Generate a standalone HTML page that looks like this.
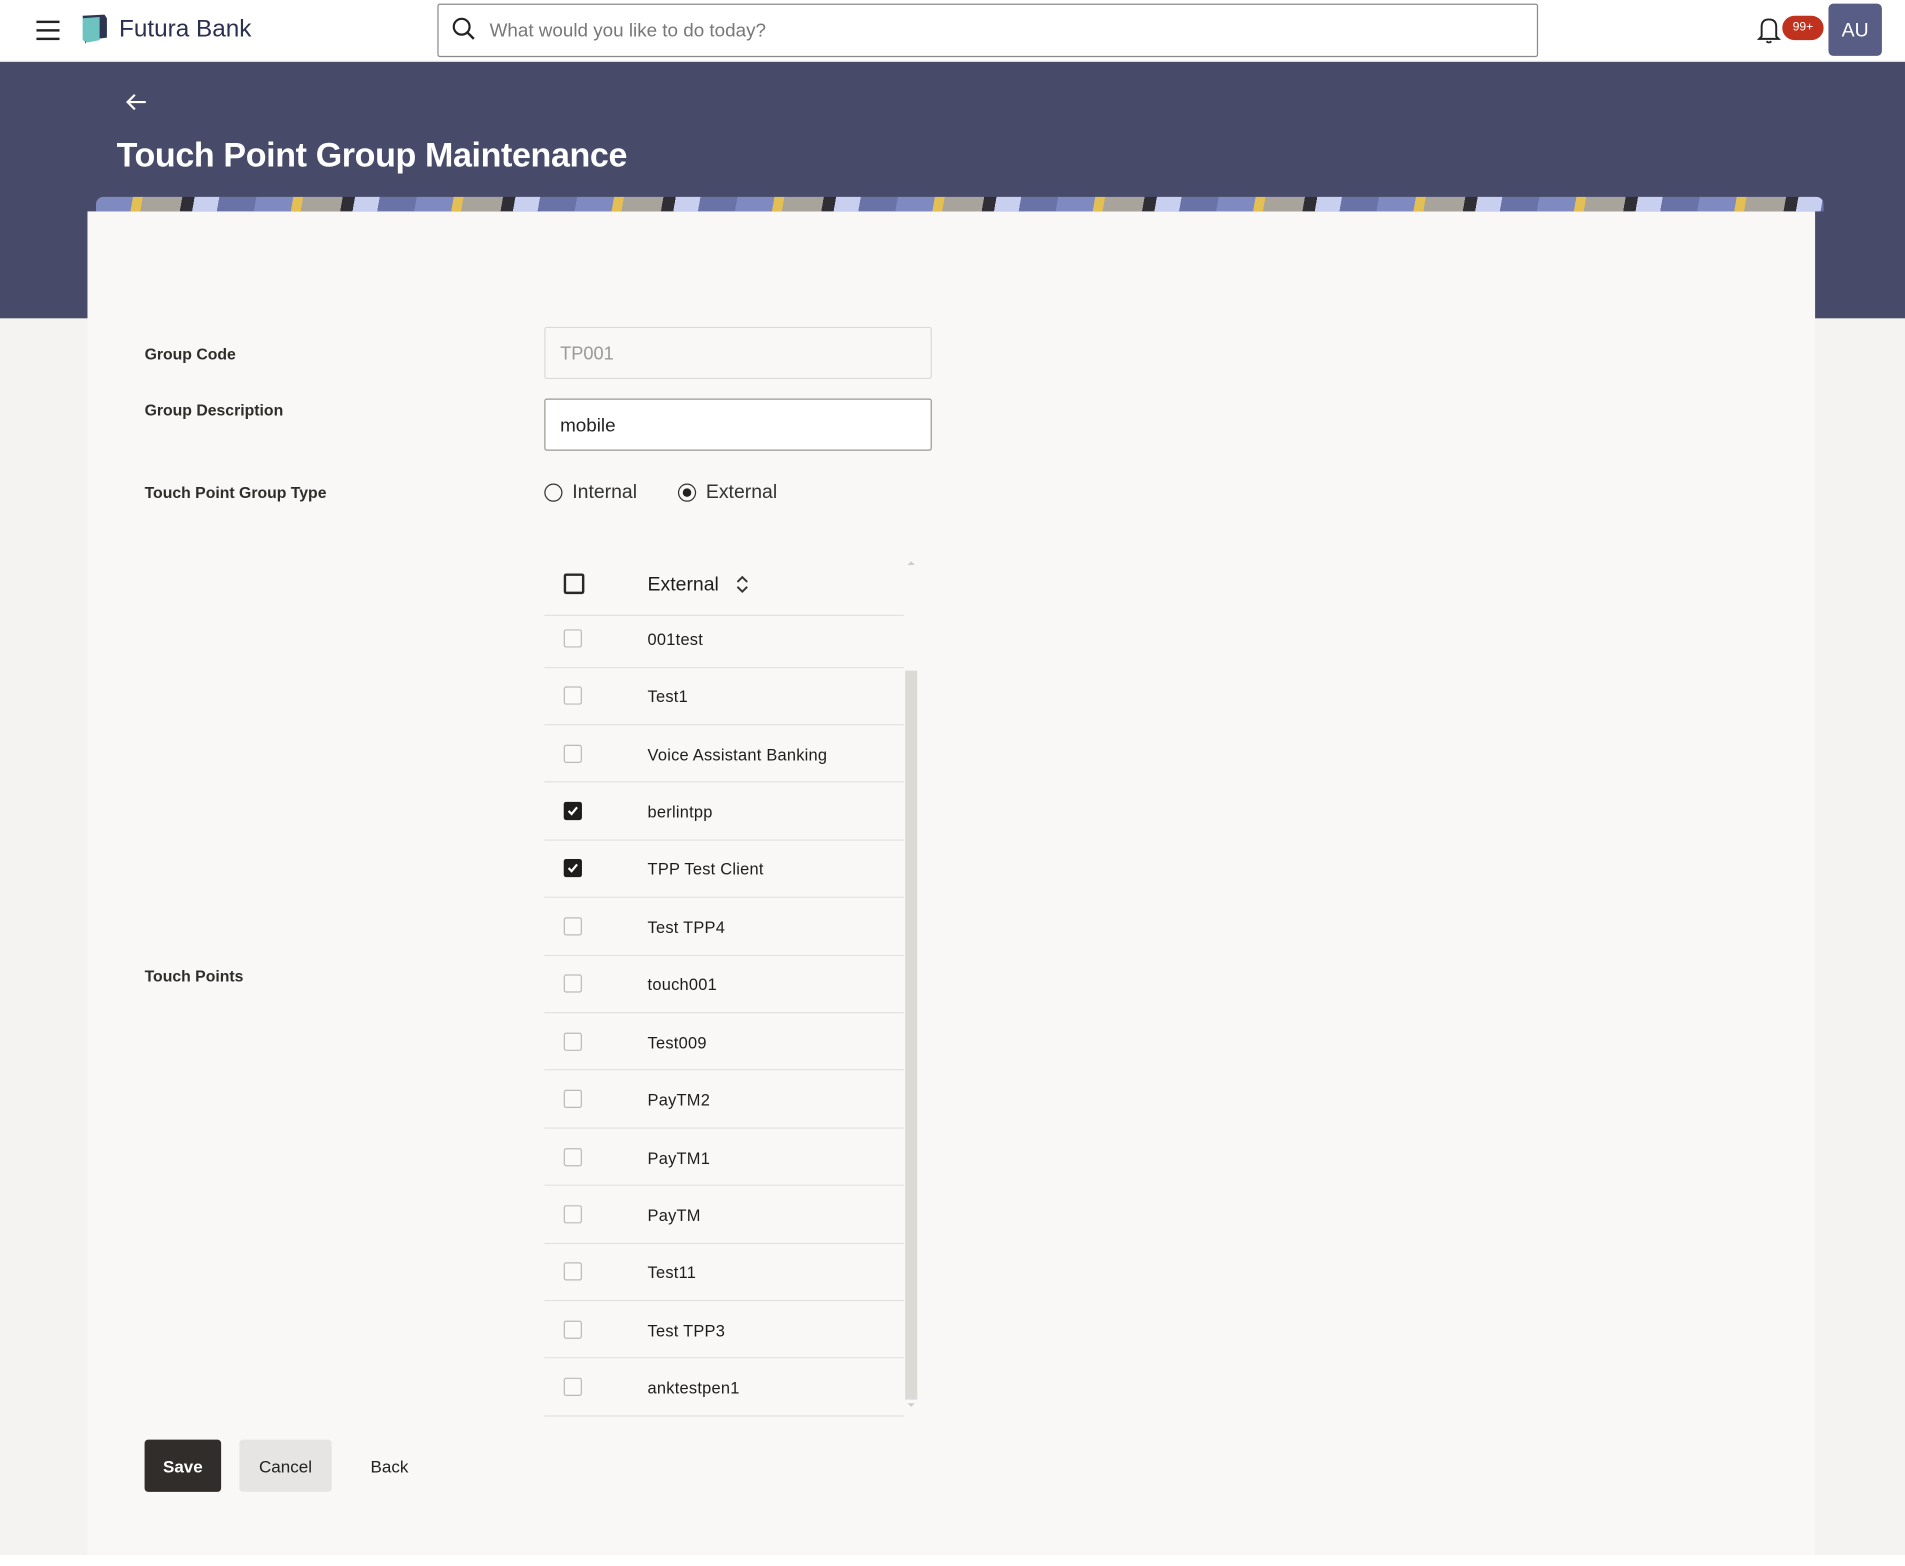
<!DOCTYPE html>
<html><head><meta charset="utf-8"><style>
html,body{margin:0;padding:0;width:1905px;height:1566px;overflow:hidden;background:#fff;}
#w{position:absolute;left:0;top:0;width:1568px;height:1289px;transform:scale(1.21492);transform-origin:0 0;font-family:"Liberation Sans",sans-serif;color:#1f1d1b;background:#f4f3f1;}
.a{position:absolute;}
.lbl{position:absolute;left:119px;font-size:13px;font-weight:bold;color:#2f2d2a;}
.cb{position:absolute;left:464px;width:13px;height:13px;border:1.5px solid #bdbab6;border-radius:2px;background:#fbfaf8;}
.cb.on{background:#1f1d1b;border-color:#1f1d1b;}
.row{position:absolute;left:533px;font-size:13.5px;color:#1f1d1b;letter-spacing:.2px;}
.sep{position:absolute;left:448px;width:296px;height:1px;background:#e4e2de;}
</style></head><body><div id="w">
<div class="a" style="left:0;top:0;width:1568px;height:50px;background:#fff;border-bottom:1px solid #e0e0e0"></div>
<div class="a" style="left:30px;top:17px;width:19px;height:2px;background:#222;box-shadow:0 7px 0 #222,0 14px 0 #222"></div>
<svg class="a" style="left:66px;top:11px" width="24" height="26" viewBox="0 0 24 26"><path d="M2 2 L20 1 L22 4 L22 20 L6 22 L4 25 Z" fill="#2e3553"/><path d="M2 4 L16 3 L16 22 L6 24 L2 22 Z" fill="#6cc3c0"/></svg>
<div class="a" style="left:98px;top:13px;font-size:20px;color:#2b3050">Futura Bank</div>
<div class="a" style="left:360px;top:3px;width:904px;height:42px;border:1px solid #8a8a8a;border-radius:2px;background:#fff"></div>
<svg class="a" style="left:372px;top:14px" width="20" height="20" viewBox="0 0 20 20"><circle cx="8" cy="8" r="6.5" fill="none" stroke="#222" stroke-width="1.8"/><path d="M13 13 L18 18" stroke="#222" stroke-width="2"/></svg>
<div class="a" style="left:403px;top:17px;font-size:15.5px;color:#777">What would you like to do today?</div>
<svg class="a" style="left:1446px;top:13px" width="20" height="24" viewBox="0 0 20 24"><path d="M4 17 L4 9 Q4 3 10 3 Q16 3 16 9 L16 17 L18 19 L2 19 Z" fill="none" stroke="#222" stroke-width="1.6"/><path d="M8 21 Q10 23 12 21" fill="none" stroke="#222" stroke-width="1.5"/></svg>
<div class="a" style="left:1467px;top:13px;width:34px;height:20px;border-radius:10px;background:#c0311e;color:#fff;font-size:10px;line-height:20px;text-align:center">99+</div>
<div class="a" style="left:1505px;top:3px;width:44px;height:43px;border-radius:4px;background:#575d84;color:#fff;font-size:16px;line-height:45px;text-align:center">AU</div>
<div class="a" style="left:0;top:51px;width:1568px;height:211px;background:#474b69"></div>
<svg class="a" style="left:102px;top:76px" width="20" height="16" viewBox="0 0 20 16"><path d="M18 8 L3 8 M9 2 L3 8 L9 14" fill="none" stroke="#fff" stroke-width="1.8"/></svg>
<div class="a" style="left:96px;top:112px;font-size:28px;font-weight:bold;color:#fff;letter-spacing:-.3px">Touch Point Group Maintenance</div>
<div class="a" style="left:79px;top:162px;width:1422px;height:12px;border-radius:6px 6px 0 0;background:repeating-linear-gradient(100deg,#7e8ac0 0 30px,#e4c054 30px 38px,#a8a49c 38px 70px,#2e2e34 70px 80px,#c9d0ef 80px 100px,#6a73a8 100px 130px)"></div>
<div class="a" style="left:72px;top:174px;width:1422px;height:1106px;background:#f9f8f6"></div>
<div class="a" style="left:0;top:1280px;width:1568px;height:9px;background:#fff"></div>
<div class="lbl" style="top:284px">Group Code</div>
<div class="lbl" style="top:330px">Group Description</div>
<div class="lbl" style="top:398px">Touch Point Group Type</div>
<div class="lbl" style="top:796px">Touch Points</div>
<div class="a" style="left:448px;top:269px;width:317px;height:41px;border:1px solid #dcdad6;border-radius:2px;background:#f9f8f6"></div>
<div class="a" style="left:461px;top:283px;font-size:15px;color:#999">TP001</div>
<div class="a" style="left:448px;top:328px;width:317px;height:41px;border:1px solid #9a9894;border-radius:2px;background:#fff"></div>
<div class="a" style="left:461px;top:342px;font-size:15.5px;color:#222">mobile</div>
<div class="a" style="left:448px;top:398px;width:13px;height:13px;border:1.5px solid #333;border-radius:50%"></div>
<div class="a" style="left:471px;top:397px;font-size:16px;color:#333">Internal</div>
<div class="a" style="left:558px;top:398px;width:13px;height:13px;border:1.5px solid #333;border-radius:50%"></div>
<div class="a" style="left:562px;top:402px;width:7px;height:7px;background:#222;border-radius:50%"></div>
<div class="a" style="left:581px;top:397px;font-size:16px;color:#333">External</div>
<div class="a" style="left:464px;top:472px;width:13px;height:13px;border:2px solid #2a2826;border-radius:2px"></div>
<div class="a" style="left:533px;top:473px;font-size:16px;font-weight:500;color:#1f1d1b">External</div>
<svg class="a" style="left:605px;top:473px" width="12" height="16" viewBox="0 0 12 16"><path d="M2 6 L6 2 L10 6 M2 10 L6 14 L10 10" fill="none" stroke="#333" stroke-width="1.6"/></svg>
<div class="a" style="left:747px;top:459px;width:0;height:0;border:3px solid transparent;border-bottom-color:#ccc"></div>
<div class="a" style="left:745px;top:552px;width:10px;height:600px;background:#dcdad7"></div>
<div class="a" style="left:747px;top:1155px;width:0;height:0;border:3px solid transparent;border-top-color:#ccc"></div>
<div class="sep" style="top:506px"></div>
<div class="cb" style="top:518px"></div><div class="row" style="top:519px">001test</div><div class="sep" style="top:549px"></div>
<div class="cb" style="top:565px"></div><div class="row" style="top:566px">Test1</div><div class="sep" style="top:596px"></div>
<div class="cb" style="top:613px"></div><div class="row" style="top:614px">Voice Assistant Banking</div><div class="sep" style="top:643px"></div>
<div class="cb on" style="top:660px"><svg width="13" height="13" viewBox="0 0 13 13" style="display:block"><path d="M3 6.5 L5.5 9 L10 3.5" fill="none" stroke="#fff" stroke-width="1.8"/></svg></div><div class="row" style="top:661px">berlintpp</div><div class="sep" style="top:691px"></div>
<div class="cb on" style="top:707px"><svg width="13" height="13" viewBox="0 0 13 13" style="display:block"><path d="M3 6.5 L5.5 9 L10 3.5" fill="none" stroke="#fff" stroke-width="1.8"/></svg></div><div class="row" style="top:708px">TPP Test Client</div><div class="sep" style="top:738px"></div>
<div class="cb" style="top:755px"></div><div class="row" style="top:756px">Test TPP4</div><div class="sep" style="top:786px"></div>
<div class="cb" style="top:802px"></div><div class="row" style="top:803px">touch001</div><div class="sep" style="top:833px"></div>
<div class="cb" style="top:850px"></div><div class="row" style="top:851px">Test009</div><div class="sep" style="top:880px"></div>
<div class="cb" style="top:897px"></div><div class="row" style="top:898px">PayTM2</div><div class="sep" style="top:928px"></div>
<div class="cb" style="top:945px"></div><div class="row" style="top:946px">PayTM1</div><div class="sep" style="top:975px"></div>
<div class="cb" style="top:992px"></div><div class="row" style="top:993px">PayTM</div><div class="sep" style="top:1023px"></div>
<div class="cb" style="top:1039px"></div><div class="row" style="top:1040px">Test11</div><div class="sep" style="top:1070px"></div>
<div class="cb" style="top:1087px"></div><div class="row" style="top:1088px">Test TPP3</div><div class="sep" style="top:1117px"></div>
<div class="cb" style="top:1134px"></div><div class="row" style="top:1135px">anktestpen1</div><div class="sep" style="top:1165px"></div>
<div class="a" style="left:119px;top:1185px;width:63px;height:43px;border-radius:3px;background:#312d2a;color:#fff;font-size:14px;font-weight:bold;line-height:44px;text-align:center">Save</div>
<div class="a" style="left:197px;top:1185px;width:76px;height:43px;border-radius:3px;background:#e6e5e3;color:#222;font-size:14px;line-height:44px;text-align:center">Cancel</div>
<div class="a" style="left:305px;top:1185px;font-size:14px;line-height:44px;color:#222">Back</div>
</div></body></html>
